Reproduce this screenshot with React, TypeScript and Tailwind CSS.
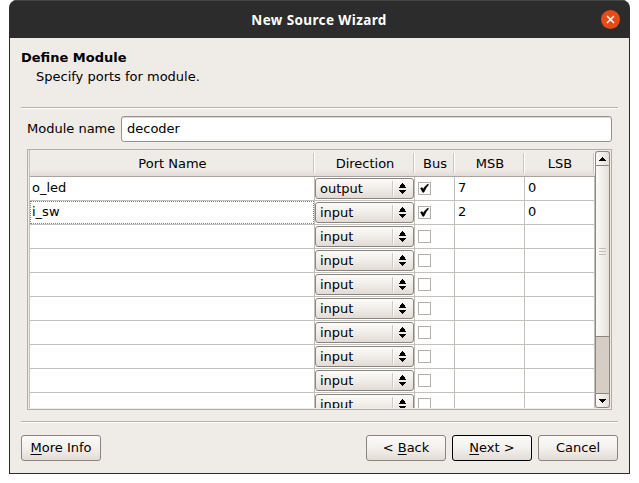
import React from 'react';

const ports = [
  { name: 'o_led', direction: 'output', bus: true, msb: '7', lsb: '0' },
  { name: 'i_sw', direction: 'input', bus: true, msb: '2', lsb: '0', focused: true },
  ...Array.from({ length: 8 }, () => ({ name: '', direction: 'input', bus: false, msb: '', lsb: '', focused: false }))
];

const columns = [
  { title: 'Port Name', width: 'w-[285px]' },
  { title: 'Direction', width: 'w-[100px]' },
  { title: 'Bus', width: 'w-[40px]' },
  { title: 'MSB', width: 'w-[70px]' },
  { title: 'LSB', width: 'w-[70px]' }
];

const Separator = () => (
  <div className="h-[2px] w-[597px] border-t border-[#b5b2ad] bg-white"></div>
);

const Combo = ({ value }: { value: string }) => (
  <div className="mt-px flex h-[21px] w-[99px] items-center rounded-[3px] border border-[#8b8480] bg-gradient-to-b from-[#fcfbf9] via-[#f1eeea] to-[#e2dbd5] pl-1">
    <span className="w-[72px] leading-[18px]">{value}</span>
    <span className="h-[15px] w-[2px] border-l border-[#cfc9c3] bg-white"></span>
    <svg className="ml-[4px]" width="9" height="13" viewBox="0 0 9 13" shapeRendering="crispEdges">
      <path d="M4 1h1v1h1v1h1v2h1v1H1V5h1V3h1V2h1z M1 8h7v1H7v1H6v1H5v1H4v-1H3v-1H2V9H1z" fill="#000" />
    </svg>
  </div>
);

const Checkbox = ({ checked }: { checked: boolean }) => (
  <div className="ml-[3px] mt-[5px] h-[13px] w-[13px] border border-[#b5afa9] bg-white">
    {checked && (
      <svg width="11" height="11" viewBox="0 0 11 11">
        <path d="M1.4 5.2 3.2 4.6 4.3 6.2 C5.5 4 7 2 9.3 1 L9.3 2.2 C7.6 4 6.2 6.3 5 9.2 L3.6 9.2 C3 7.6 2.4 6.5 1.4 5.2Z" fill="#000" stroke="#000" strokeWidth=".5" />
      </svg>
    )}
  </div>
);

const ArrowButton = ({ down = false }: { down?: boolean }) => (
  <div
    className={`flex h-[15px] w-[15px] items-center justify-center border border-[#8b8480] bg-gradient-to-r from-[#fcfbf9] to-[#e5dfd9] ${
      down ? 'rounded-b-[3px]' : 'rounded-t-[3px]'
    }`}
  >
    <svg width="7" height="4" viewBox="0 0 7 4" shapeRendering="crispEdges">
      <path d={down ? 'M0 0h7v1H6v1H5v1H4v1H3V3H2V2H1V1H0z' : 'M3 0h1v1h1v1h1v1h1v1H0V3h1V2h1V1h1z'} fill="#000" />
    </svg>
  </div>
);

const Scrollbar = () => (
  <div className="ml-px mt-px flex h-[257px] w-[15px] flex-col bg-[#d6cdc5]">
    <ArrowButton />
    <div className="flex h-[171px] flex-col items-center justify-center gap-[2px] border-x border-b border-[#8b8480] bg-gradient-to-r from-[#fcfbf9] to-[#e5dfd9]">
      <span className="h-px w-[7px] bg-[#c4bcb5]"></span>
      <span className="h-px w-[7px] bg-[#c4bcb5]"></span>
      <span className="h-px w-[7px] bg-[#c4bcb5]"></span>
    </div>
    <div className="h-[56px] border-x border-[#8b8480]"></div>
    <ArrowButton down />
  </div>
);

const Button = ({ children, primary = false }: { children: React.ReactNode; primary?: boolean }) => (
  <button
    className={`h-[26px] w-[80px] rounded-[3px] border bg-gradient-to-b from-[#fcfbf9] via-[#f3f0ed] to-[#e3dcd6] leading-[24px] whitespace-pre ${
      primary ? 'border-black' : 'border-[#8b8480]'
    }`}
  >
    {children}
  </button>
);

const Hot = ({ children }: { children: string }) => (
  <span className="underline decoration-1 underline-offset-2">{children}</span>
);

const App = () => {
  return (
    <div className="h-[483px] w-[639px] overflow-hidden bg-white pl-[9px] font-['DejaVu_Sans',sans-serif] text-[13px] text-black">
      <div className="flex h-[474px] w-[621px] flex-col overflow-hidden rounded-t-[8px] bg-[#2c2c2c]">
        {/* Title bar */}
        <div className="flex h-[38px] shrink-0 items-center border-t border-[#454545] pl-[60px] pr-[10px]">
          <h1 className="flex-1 pt-[2px] text-center font-['Noto_Sans',sans-serif] text-[13.5px] font-bold tracking-[0.38px] text-white">New Source Wizard</h1>
          <div className="ml-[32px] flex h-[19px] w-[19px] items-center justify-center rounded-full bg-[#e44c16]">
            <svg width="9" height="9" viewBox="0 0 9 9">
              <path d="M1 1l7 7M8 1L1 8" stroke="#fff" strokeWidth="1.5" />
            </svg>
          </div>
        </div>

        <div className="mx-px mb-px flex-1 bg-[#efebe7] pl-[11px]">
          <div className="h-[69px] pt-[10px]">
            <h2 className="font-bold leading-[19px]">Define Module</h2>
            <p className="pl-[15px] leading-[19px]">Specify ports for module.</p>
          </div>
          <Separator />

          <div className="mt-[7px] flex h-[26px] pl-[6px]">
            <label className="w-[94px] leading-[25px]">Module name</label>
            <div className="h-[26px] w-[491px] rounded-[3px] border border-[#99928c] bg-white pl-[5px] leading-[24px] shadow-[inset_0_1px_0_#ddd8d4]">decoder</div>
          </div>

          {/* Ports table */}
          <div className="ml-[6px] mt-[7px] flex h-[261px] w-[585px] overflow-hidden border border-[#b3aea4] pl-px">
            <div className="h-[258px] w-[566px] overflow-hidden border-l border-[#c4c0bc]">
              <div className="flex h-[27px] items-center border-b border-[#aaa39d] bg-gradient-to-b from-[#efebe7] from-75% to-[#e2dcd7]">
                {columns.map((column) => (
                  <div key={column.title} className={`flex h-[20px] items-center justify-center ${column.width}`}>
                    <span className="flex-1 pl-[2px] pt-[2px] text-center">{column.title}</span>
                    <span className="h-[20px] w-[2px] border-l border-[#cbc5c0] bg-white"></span>
                  </div>
                ))}
              </div>
              {ports.map((port, index) => (
                <div key={index} className="flex h-[24px] bg-white leading-[21px]">
                  <div className="w-[285px] border-b border-r border-[#c4c0bc]">
                    <div className={`h-[23px] border pl-px leading-[19px] ${port.focused ? 'border-dotted border-[#8b8580]' : 'border-transparent'}`}>{port.name}</div>
                  </div>
                  <div className="w-[100px] border-b border-r border-[#c4c0bc]">
                    <Combo value={port.direction} />
                  </div>
                  <div className="w-[40px] border-b border-r border-[#c4c0bc]">
                    <Checkbox checked={port.bus} />
                  </div>
                  <div className="w-[70px] border-b border-r border-[#c4c0bc] pl-[3px]">{port.msb}</div>
                  <div className="w-[70px] border-b border-r border-[#c4c0bc] pl-[3px]">{port.lsb}</div>
                </div>
              ))}
            </div>
            <div className="-ml-px">
              <Scrollbar />
            </div>
          </div>

          <div className="mt-[11px]">
            <Separator />
          </div>
          <div className="mt-[12px] flex w-[597px] gap-[6px]">
            <div className="flex-1">
              <Button><Hot>M</Hot>ore Info</Button>
            </div>
            <Button>&lt; <Hot>B</Hot>ack</Button>
            <Button primary><Hot>N</Hot>ext &gt;</Button>
            <Button>Cancel</Button>
          </div>
        </div>
      </div>
    </div>
  );
};

export default App;
